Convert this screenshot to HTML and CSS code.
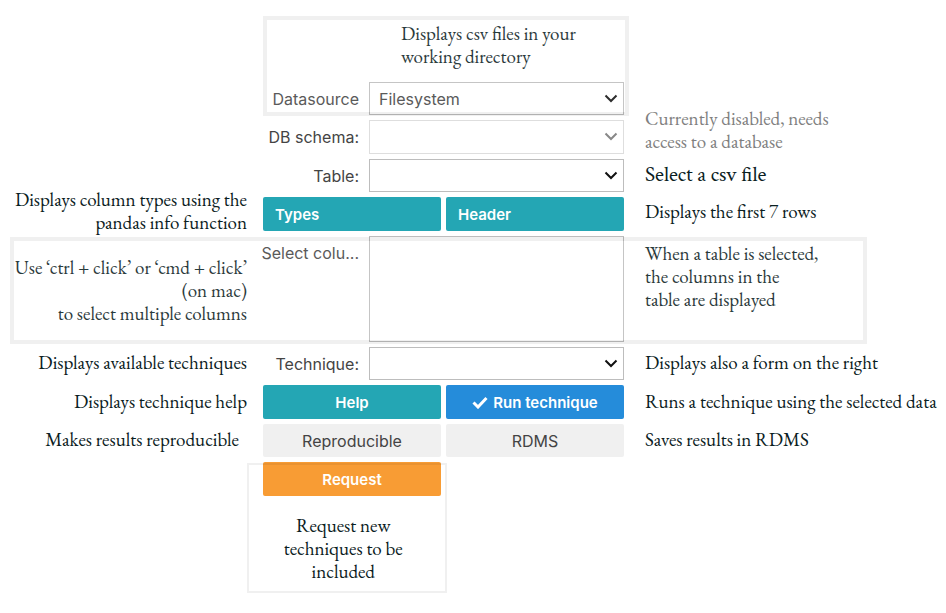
FILE: index.html
```
<!DOCTYPE html>
<html lang="en">
<head>
<meta charset="utf-8">
<title>Technique form guide</title>
<link rel="stylesheet" href="styles.css">
</head>
<body>
<main class="guide">
  <p class="note note-intro">Displays csv files in your<br>working directory</p>

  <div class="field row-source">
    <label for="source">Datasource</label>
    <div class="picker">
      <select id="source"><option>Filesystem</option></select>
      <svg viewBox="0 0 14 9" aria-hidden="true"><path d="M1.5 1.5 7 7l5.5-5.5"/></svg>
    </div>
  </div>

  <div class="field row-schema">
    <label for="schema">DB schema:</label>
    <div class="picker">
      <select id="schema" disabled></select>
      <svg viewBox="0 0 14 9" aria-hidden="true"><path d="M1.5 1.5 7 7l5.5-5.5"/></svg>
    </div>
  </div>
  <p class="note right muted row-schema">Currently disabled, needs<br>access to a database</p>

  <div class="field row-table">
    <label for="table">Table:</label>
    <div class="picker">
      <select id="table"></select>
      <svg viewBox="0 0 14 9" aria-hidden="true"><path d="M1.5 1.5 7 7l5.5-5.5"/></svg>
    </div>
  </div>
  <p class="note right wide row-table">Select a csv file</p>

  <p class="note left raised row-info">Displays column types using the<br>pandas info function</p>
  <div class="buttons row-info">
    <button type="button" class="teal start">Types</button>
    <button type="button" class="teal start">Header</button>
  </div>
  <p class="note right raised row-info">Displays the first 7 rows</p>

  <p class="note left lowered row-columns">Use ‘ctrl + click’ or ‘cmd + click’<br>(on mac)<br>to select multiple columns</p>
  <div class="field field-list row-columns">
    <label for="columns">Select colu...</label>
    <select id="columns" multiple></select>
  </div>
  <p class="note right top row-columns">When a table is selected,<br>the columns in the<br>table are displayed</p>

  <p class="note left row-technique">Displays available techniques</p>
  <div class="field row-technique">
    <label for="technique">Technique:</label>
    <div class="picker">
      <select id="technique"></select>
      <svg viewBox="0 0 14 9" aria-hidden="true"><path d="M1.5 1.5 7 7l5.5-5.5"/></svg>
    </div>
  </div>
  <p class="note right row-technique">Displays also a form on the right</p>

  <p class="note left row-run">Displays technique help</p>
  <div class="buttons row-run">
    <button type="button" class="teal">Help</button>
    <button type="button" class="blue"><svg class="check" viewBox="0 0 16 13" aria-hidden="true"><path d="M1.5 6.5 6 11 14.5 2"/></svg>Run technique</button>
  </div>
  <p class="note right row-run">Runs a technique using the selected data</p>

  <p class="note left inset row-save">Makes results reproducible</p>
  <div class="buttons row-save">
    <button type="button">Reproducible</button>
    <button type="button">RDMS</button>
  </div>
  <p class="note right row-save">Saves results in RDMS</p>

  <div class="buttons row-request">
    <button type="button" class="orange">Request</button>
  </div>
  <p class="note note-request">Request new<br>techniques to be<br>included</p>

  <div class="frame frame-source"></div>
  <div class="frame frame-columns"></div>
  <div class="frame frame-request"></div>
</main>
</body>
</html>
```
FILE: styles.css
```
* {
  box-sizing: border-box;
}

body {
  margin: 0;
  background: #fff;
  font-family: Inter, "Liberation Sans", sans-serif;
  font-size: 16px;
  color: #444;
}

.guide {
  display: grid;
  grid-template-columns: minmax(0, 247fr) minmax(0, 361fr) minmax(0, 306fr);
  grid-template-rows: 77px 33px 34px 33px 34px 106px 33px 34px 33px 34px auto;
  gap: 5px 16px;
}

.row-source { grid-row: 2; }
.row-schema { grid-row: 3; }
.row-table { grid-row: 4; }
.row-info { grid-row: 5; }
.row-columns { grid-row: 6; }
.row-technique { grid-row: 7; }
.row-run { grid-row: 8; }
.row-save { grid-row: 9; }
.row-request { grid-row: 10; }

/* Annotations */
.note {
  margin: 0;
  align-self: center;
  padding-bottom: 2px;
  font-family: "EB Garamond", "Liberation Serif", serif;
  font-size: 19px;
  line-height: 23px;
  color: #0a2022;
  white-space: nowrap;
}

.left {
  grid-column: 1;
  justify-self: end;
  text-align: right;
}

.right {
  grid-column: 3;
  padding-left: 5px;
}

.raised { padding-bottom: 6px; }
.lowered { padding: 2px 0 0; }
.inset { padding-right: 8px; }

.wide {
  font-family: "Crimson Text", "EB Garamond", "Liberation Serif", serif;
  font-size: 21px;
}

.muted {
  padding-bottom: 14px;
  color: #808080;
}

.top {
  align-self: start;
  padding-top: 6px;
}

.note-intro {
  grid-area: 1 / 2;
  align-self: start;
  padding: 22px 0 0 138px;
}

.note-request {
  grid-area: 11 / 2;
  width: 50%;
  padding: 13px 20px 10px 0;
  text-align: center;
}

/* Form */
.field {
  grid-column: 2;
  display: grid;
  grid-template-columns: 96px minmax(0, 1fr);
  column-gap: 10px;
  align-items: center;
}

.field label {
  justify-self: end;
  white-space: nowrap;
}

.field-list label {
  align-self: start;
  padding-top: 7px;
}

.picker {
  position: relative;
  height: 100%;
}

select {
  appearance: none;
  display: block;
  width: 100%;
  height: 100%;
  margin: 0;
  padding: 0 32px 0 9px;
  border: 1px solid #bdbdbd;
  border-radius: 0;
  background: #fff;
  color: #444;
  font: inherit;
  opacity: 1;
}

.picker svg {
  position: absolute;
  right: 6px;
  top: 12px;
  width: 14px;
  height: 9px;
  fill: none;
  stroke: #111;
  stroke-width: 2;
  pointer-events: none;
}

select:disabled { border-color: #dedede; }
select:disabled + svg { stroke: #888; }

.buttons {
  grid-column: 2;
  display: grid;
  grid-template-columns: 1fr 1fr;
  gap: 5px;
}

button {
  display: flex;
  align-items: center;
  justify-content: center;
  gap: 5px;
  padding: 0 12px;
  border: 0;
  border-radius: 2px;
  background: #f0f0f0;
  color: #444;
  font: inherit;
}

.teal, .blue, .orange {
  color: #fff;
  font-size: 15px;
  font-weight: 600;
}

.teal { background: #24a6b4; }
.blue { background: #258cda; }
.orange { background: #f89c34; }
.start { justify-content: flex-start; }

.check {
  width: 16px;
  height: 13px;
  fill: none;
  stroke: #fff;
  stroke-width: 3;
}

/* Translucent outlines over the grid */
.frame {
  border: 4px solid rgba(0, 0, 0, 0.06);
  background: rgba(255, 255, 255, 0.12);
  background-clip: padding-box;
  pointer-events: none;
  z-index: 1;
}

.frame-source {
  grid-area: 1 / 2 / 3 / 3;
  margin: 16px -5px -1px 0;
}

.frame-columns {
  grid-area: 6 / 1 / 7 / 4;
  margin: 1px 79px -2px 10px;
}

.frame-request {
  grid-area: 10 / 2 / 12 / 3;
  margin: 1px calc(50% - 3px) 0 -16px;
  border-width: 2px;
  background: none;
}
```
